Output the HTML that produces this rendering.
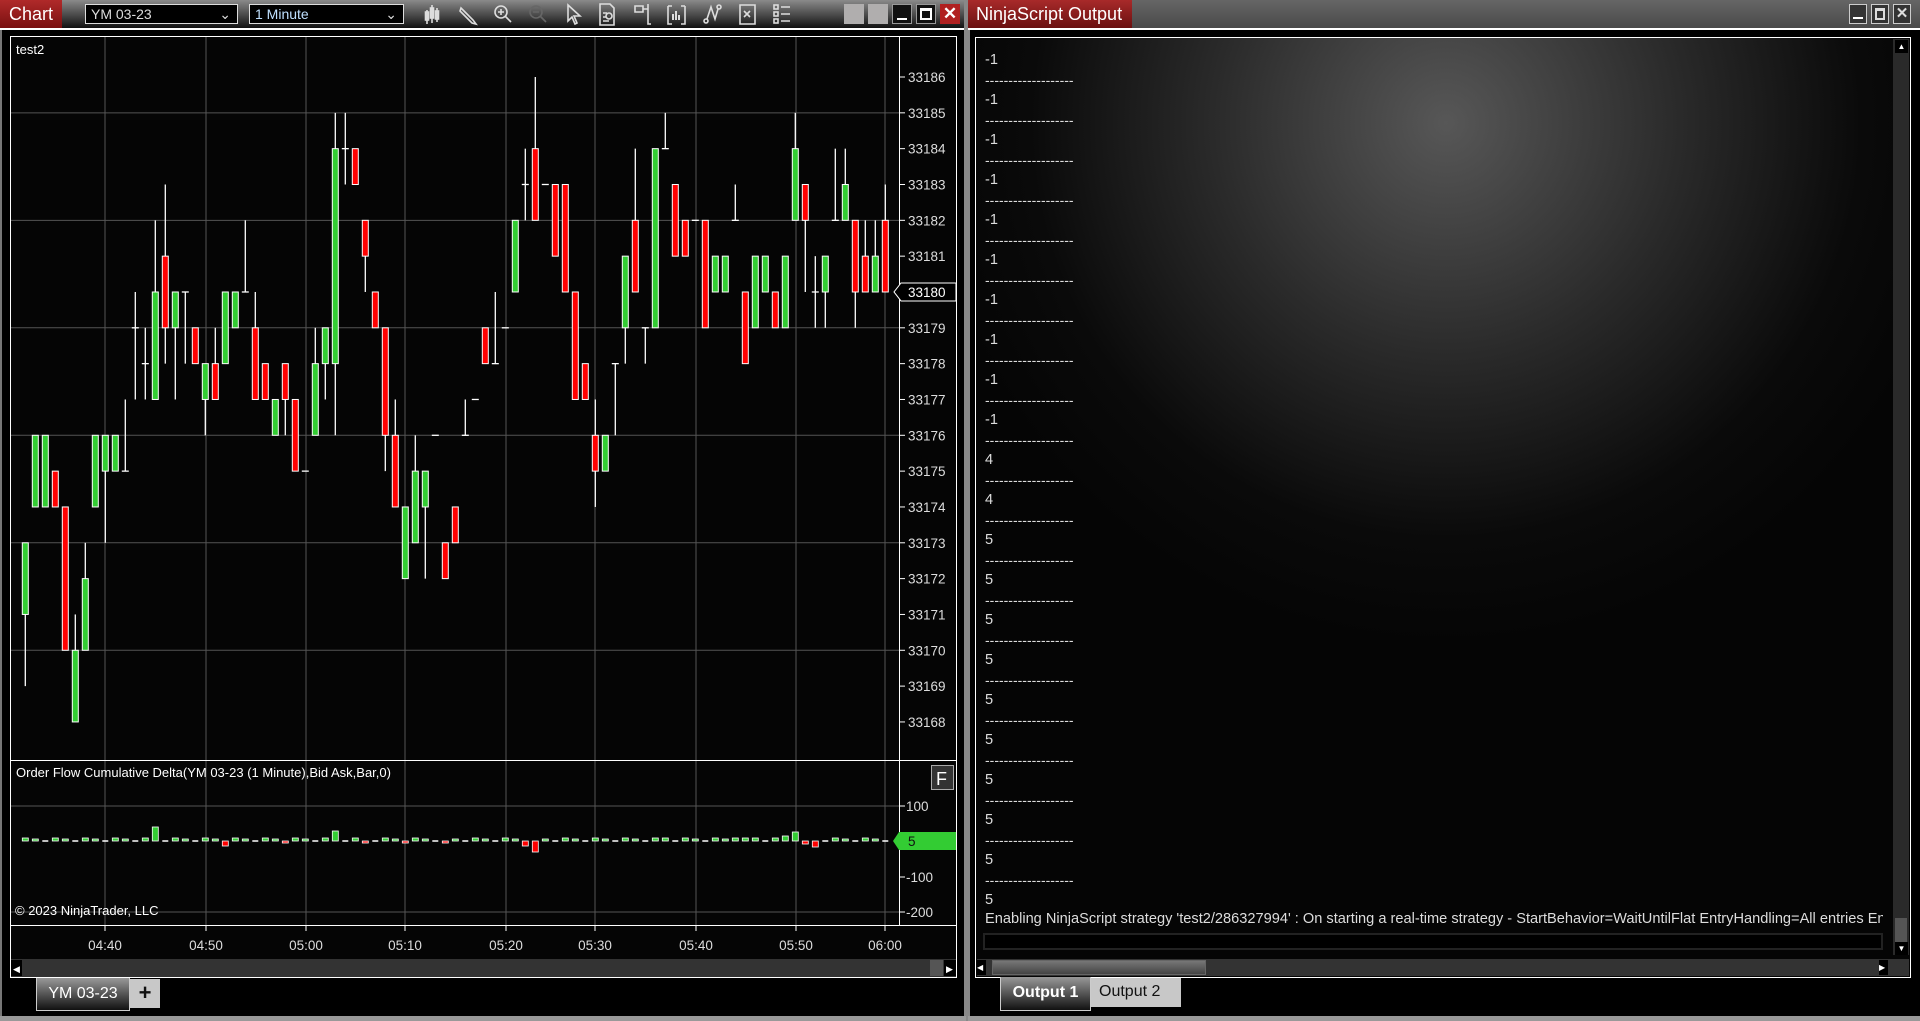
<!DOCTYPE html>
<html><head><meta charset="utf-8"><style>
*{margin:0;padding:0;box-sizing:border-box}
body{width:1920px;height:1021px;background:#000;overflow:hidden;position:relative;font-family:"Liberation Sans",sans-serif;color:#ddd}
.abs{position:absolute}
.tb{background:linear-gradient(#8a8a8a,#2a2a2a 80%,#111)}
.btn{position:absolute;top:4px;width:20px;height:20px}
.dd{position:absolute;top:4px;height:20px;border:1px solid #ddd;background:#000;color:#ddd;font-size:14px;line-height:18px;padding-left:5px}
.dd span{position:absolute;right:6px;top:0}
.out{position:absolute;left:985px;font-size:14.6px;color:#ddd;white-space:nowrap}
</style></head><body>
<div class="abs tb" style="left:0;top:0;width:966px;height:28px"></div>
<div class="abs" style="left:0;top:0;width:62px;height:28px;background:linear-gradient(#b02a2a,#7a1010);color:#fff;font-size:18px;line-height:28px;padding-left:9px">Chart</div>
<div class="dd" style="left:85px;width:153px">YM 03-23<span>&#8964;</span></div>
<div class="dd" style="left:249px;width:155px;color:#bfe0ff">1 Minute<span style="color:#ddd">&#8964;</span></div>
<svg class="abs" style="left:420px;top:2px" width="380" height="26" stroke="#ddd" fill="none" stroke-width="1.6">
 <g transform="translate(4,0)"><path d="M3 8v14M8 3v18M13 6v14"/><rect x="1.5" y="10" width="3" height="8" fill="#ddd"/><rect x="6.5" y="6" width="3" height="10" fill="#ddd"/><rect x="11.5" y="9" width="3" height="8" fill="#ddd"/></g>
 <g transform="translate(38,0)"><path d="M3 6l12 12l3 4l-4-1l-12-12z"/></g>
 <g transform="translate(72,0)"><circle cx="9" cy="10" r="6"/><path d="M13 14l6 6M6 10h6M9 7v6"/></g>
 <g transform="translate(107,0)" stroke="#666"><circle cx="9" cy="10" r="6"/><path d="M13 14l6 6M6 10h6"/></g>
 <g transform="translate(144,0)"><path d="M4 3v16l4-4l3 7l2-1l-3-7h6z"/></g>
 <g transform="translate(177,0)"><path d="M3 2h10l4 4v17h-14z"/><circle cx="12" cy="14" r="3"/><path d="M6 11h4M6 15h3M6 19h6"/></g>
 <g transform="translate(212,0)"><path d="M3 4h8v6h-8zM11 7h5M16 2v20h3"/></g>
 <g transform="translate(246,0)"><path d="M2 4v18h4M19 4v18h-4M6 4h-4M15 4h4"/><path d="M7 18v-6M10 18v-9M13 18v-5" stroke-width="2"/></g>
 <g transform="translate(282,0)"><circle cx="4" cy="19" r="2"/><circle cx="17" cy="5" r="2"/><path d="M5 17l4-12l4 12l3-10"/></g>
 <g transform="translate(317,0)"><path d="M3 3h15v19h-15z"/><path d="M7 9l6 6M7 15l6-6"/></g>
 <g transform="translate(352,0)"><rect x="2" y="3" width="4" height="4"/><rect x="2" y="10" width="4" height="4"/><rect x="2" y="17" width="4" height="4"/><path d="M9 5h9M9 12h9M9 19h9"/></g>
</svg>
<div class="btn" style="left:844px;background:#b0aeae"></div>
<div class="btn" style="left:868px;background:#b0aeae"></div>
<div class="btn" style="left:892px;background:#111;border:1px solid #999"><div class="abs" style="left:4px;top:13px;width:10px;height:2px;background:#fff"></div></div>
<div class="btn" style="left:916px;background:#111;border:1px solid #999"><div class="abs" style="left:3px;top:3px;width:12px;height:12px;border:2px solid #fff;border-top-width:3px"></div></div>
<div class="btn" style="left:940px;background:#b02020;color:#fff;font-size:17px;font-weight:bold;text-align:center;line-height:20px">✕</div>
<div class="abs" style="left:0;top:28px;width:966px;height:2px;background:#fff"></div>
<div class="abs" style="left:0;top:30px;width:966px;height:988px;background:#000;border-left:2px solid #777"></div>
<div class="abs" style="left:964px;top:0;width:4px;height:1021px;background:#888"></div>
<div class="abs" style="left:0;top:1016px;width:966px;height:5px;background:#999"></div>

<svg class="abs" id="ch" style="left:0;top:0" width="966" height="1021" font-family="Liberation Sans, sans-serif"></svg>

<div class="abs" style="left:36px;top:978px;width:94px;height:33px;background:linear-gradient(#999,#111);border:1px solid #ccc;border-top:none;color:#fff;font-size:16px;line-height:32px;text-align:center">YM 03-23</div>
<div class="abs" style="left:130px;top:979px;width:30px;height:29px;background:#c8c8c8;color:#111;font-size:22px;font-weight:bold;line-height:28px;text-align:center">+</div>

<div class="abs" style="left:968px;top:0;width:952px;height:28px;background:linear-gradient(#666,#4a4a4a)"></div>
<div class="abs" style="left:968px;top:0;width:164px;height:28px;background:linear-gradient(#a82a2a,#6a1010);color:#fff;font-size:18px;line-height:28px;padding-left:8px">NinjaScript Output</div>
<div class="btn" style="left:1849px;width:18px;border:1px solid #ccc;background:#333"><div class="abs" style="left:3px;top:12px;width:10px;height:2px;background:#fff"></div></div>
<div class="btn" style="left:1871px;width:18px;border:1px solid #ccc;background:#333"><div class="abs" style="left:3px;top:3px;width:10px;height:12px;border:2px solid #ddd;border-top-width:3px"></div></div>
<div class="btn" style="left:1893px;width:18px;border:1px solid #ccc;background:#333;color:#ddd;font-size:15px;font-weight:bold;text-align:center;line-height:18px">✕</div>
<div class="abs" style="left:968px;top:28px;width:952px;height:2px;background:#fff"></div>
<div class="abs" style="left:970px;top:30px;width:950px;height:986px;background:#000"></div>
<div class="abs" style="left:975px;top:37px;width:936px;height:941px;border:1px solid #fff;background:radial-gradient(circle 520px at 470px 85px,#575757,#2a2a2a 45%,#0a0a0a 80%,#050505)"></div>
<div class="abs" style="left:1893px;top:39px;width:16px;height:916px;background:#2a2a2a"></div>
<div class="abs" style="left:1895px;top:40px;width:13px;height:13px;background:#000;color:#fff;font-size:8px;text-align:center;line-height:13px">▲</div>
<div class="abs" style="left:1895px;top:918px;width:12px;height:25px;background:#555"></div>
<div class="abs" style="left:1895px;top:942px;width:13px;height:13px;background:#000;color:#fff;font-size:8px;text-align:center;line-height:13px">▼</div>
<div id="outtxt"></div>
<div class="out" style="top:911px;width:898px;overflow:hidden">Enabling NinjaScript strategy 'test2/286327994' : On starting a real-time strategy - StartBehavior=WaitUntilFlat EntryHandling=All entries EntriesPerDirection=1</div>
<div class="abs" style="left:983px;top:933px;width:900px;height:17px;border:2px solid #222;background:#000"></div>
<div class="abs" style="left:977px;top:959px;width:932px;height:17px;background:#333"></div>
<div class="abs" style="left:992px;top:960px;width:214px;height:15px;background:linear-gradient(#777,#444);border:1px solid #666"></div>
<div class="abs" style="left:977px;top:960px;width:9px;height:15px;background:#000;color:#fff;font-size:8px;line-height:15px">◀</div>
<div class="abs" style="left:1879px;top:960px;width:9px;height:15px;background:#000;color:#fff;font-size:8px;line-height:15px">▶</div>
<div class="abs" style="left:1000px;top:977px;width:91px;height:34px;background:linear-gradient(#999,#111);border:1px solid #ccc;border-top:none;color:#fff;font-size:16px;font-weight:bold;line-height:32px;text-align:center">Output 1</div>
<div class="abs" style="left:1091px;top:978px;width:90px;height:29px;background:#c8c8c8;color:#111;font-size:16px;line-height:28px;padding-left:8px">Output 2</div>
<div class="abs" style="left:968px;top:1016px;width:952px;height:5px;background:#999"></div>
<div class="abs" style="left:968px;top:30px;width:2px;height:986px;background:#888"></div>

<script>
(function(){
var o='',vals=[];
for(var i=0;i<10;i++)vals.push('-1');vals.push('4','4');for(i=0;i<10;i++)vals.push('5');
for(i=0;i<vals.length;i++){var y=52+i*40;o+='<div class="out" style="top:'+y+'px">'+vals[i]+'</div>';
if(i<vals.length-1)o+='<div class="out" style="top:'+(y+20)+'px;font-size:14px">-------------------</div>';}
document.getElementById('outtxt').innerHTML=o;
var C=[[71,73,73,69],[74,76,76,74],[74,76,76,74],[75,74,75,74],[74,70,74,70],[68,70,71,68],[70,72,73,70],[74,76,76,74],[75,76,76,73],[75,76,76,75],
[75,75,77,75],[79,79,80,77],[78,78,79,77],[77,80,82,77],[81,79,83,78],[79,80,80,77],[80,80,80,78],[79,78,79,78],[77,78,78,76],[78,77,79,77],
[78,80,80,78],[79,80,80,79],[80,80,82,80],[79,77,80,77],[78,77,78,77],[76,77,77,76],[78,77,78,76],[77,75,77,75],[75,75,75,75],[76,78,79,76],
[78,79,79,77],[78,84,85,76],[84,84,85,83],[84,83,84,83],[82,81,82,80],[80,79,80,79],[79,76,79,75],[76,74,77,74],[72,74,74,72],[73,75,76,73],
[74,75,75,72],[76,76,76,76],[73,72,73,72],[74,73,74,73],[76,76,77,76],[77,77,77,77],[79,78,79,78],[78,78,80,78],[79,79,79,79],[80,82,82,80],
[83,83,84,82],[84,82,86,82],[83,83,83,83],[83,81,83,81],[83,80,83,80],[80,77,80,77],[78,77,78,77],[76,75,77,74],[75,76,76,75],[78,78,78,76],
[79,81,81,78],[82,80,84,80],[79,79,79,78],[79,84,84,79],[84,84,85,84],[83,81,83,81],[82,81,82,81],[82,82,82,82],[82,79,82,79],[80,81,81,80],
[80,81,81,80],[82,82,83,82],[80,78,80,78],[79,81,81,79],[80,81,81,80],[80,79,80,79],[79,81,81,79],[82,84,85,82],[83,82,83,80],[80,80,81,79],
[80,81,81,79],[82,82,84,82],[82,83,84,82],[82,80,82,79],[81,80,82,80],[80,81,82,80],[82,80,83,80]];
function Y(p){return 77+(33186-p)*35.83;}
function X(i){return 25.3+10*i;}
var s='';
s+='<rect x="10.5" y="36.5" width="946" height="941" fill="#050505" stroke="#fff"/>';
var gx=[105,206,306,405,506,595,696,796,885];
gx.forEach(function(x){s+='<line x1="'+x+'" y1="37" x2="'+x+'" y2="925" stroke="#555"/>';});
[85,82,79,76,73,70].forEach(function(p){s+='<line x1="11" y1="'+Y(33100+p)+'" x2="900" y2="'+Y(33100+p)+'" stroke="#555"/>';});
[806,912].forEach(function(y){s+='<line x1="11" y1="'+y+'" x2="900" y2="'+y+'" stroke="#555"/>';});
s+='<line x1="10" y1="760.5" x2="957" y2="760.5" stroke="#fff"/>';
s+='<line x1="10" y1="925.5" x2="957" y2="925.5" stroke="#fff"/>';
s+='<line x1="899.5" y1="37" x2="899.5" y2="925" stroke="#fff"/>';
for(var p=68;p<=86;p++){var y=Y(33100+p);s+='<line x1="900" y1="'+y+'" x2="905" y2="'+y+'" stroke="#fff"/>';
 if(p!=80)s+='<text x="908" y="'+(y+5)+'" fill="#ddd" font-size="13.5">331'+p+'</text>';}
var y80=Y(33180);
s+='<path d="M894 '+y80+' l7 -9 h55 v18 h-55 z" fill="#000" stroke="#fff"/><text x="908" y="'+(y80+5)+'" fill="#fff" font-size="13.5">33180</text>';
C.forEach(function(c,i){var x=X(i);var o=33100+c[0],cl=33100+c[1],h=33100+c[2],l=33100+c[3];
 s+='<line x1="'+x+'" y1="'+Y(h)+'" x2="'+x+'" y2="'+Y(l)+'" stroke="#fff" stroke-width="1.3"/>';
 if(o==cl){s+='<line x1="'+(x-3.5)+'" y1="'+Y(o)+'" x2="'+(x+3.5)+'" y2="'+Y(o)+'" stroke="#fff" stroke-width="1.3"/>';}
 else{var t=Y(Math.max(o,cl)),b=Y(Math.min(o,cl));s+='<rect x="'+(x-3)+'" y="'+t+'" width="6" height="'+(b-t)+'" fill="'+(cl>o?'#3c3':'#f00')+'" stroke="#fff"/>';}
});
var big={13:13,31:9,77:8,76:4,20:-5,51:-11,50:-5,79:-6,78:-3,15:2,26:-2,34:-2,42:-2,71:2,73:2,38:-2,64:2,30:2};
for(var i=0;i<87;i++){var x=X(i),v=big[i];
 if(v===undefined){v=(i%3==0)?2:(i%3==1?1:0);}
 if(v>0){s+='<rect x="'+(x-3)+'" y="'+(841-v-1)+'" width="6" height="'+(v+1)+'" fill="#3c3" stroke="#fff" stroke-width="0.8"/>';}
 else if(v<0){s+='<rect x="'+(x-3)+'" y="841" width="6" height="'+(-v)+'" fill="#f00" stroke="#fff" stroke-width="0.8"/>';}
 else s+='<line x1="'+(x-3)+'" y1="841" x2="'+(x+3)+'" y2="841" stroke="#fff" stroke-width="1.5"/>';}
[[806,'100'],[877,'-100'],[912,'-200']].forEach(function(a){s+='<line x1="900" y1="'+a[0]+'" x2="905" y2="'+a[0]+'" stroke="#fff"/><text x="906" y="'+(a[0]+5)+'" fill="#ddd" font-size="13.5">'+a[1]+'</text>';});
s+='<path d="M893 841 l6 -9 h57 v18 h-57 z" fill="#3c3"/><text x="908" y="846" fill="#111" font-size="13.5">5</text>';
s+='<rect x="931.5" y="765.5" width="22" height="24" fill="#333" stroke="#aaa"/><text x="936" y="785" fill="#fff" font-size="18">F</text>';
var tl=['04:40','04:50','05:00','05:10','05:20','05:30','05:40','05:50','06:00'];
gx.forEach(function(x,k){s+='<line x1="'+x+'" y1="926" x2="'+x+'" y2="931" stroke="#fff"/><text x="'+x+'" y="950" fill="#ddd" font-size="13.5" text-anchor="middle">'+tl[k]+'</text>';});
s+='<rect x="11" y="959" width="945" height="18" fill="#333"/><rect x="11" y="960" width="11" height="16" fill="#000"/><text x="13" y="972" fill="#fff" font-size="9">◀</text><rect x="944" y="960" width="12" height="16" fill="#000"/><text x="946" y="972" fill="#fff" font-size="9">▶</text><rect x="930" y="960" width="13" height="16" fill="#555"/>';
s+='<text x="16" y="54" fill="#fff" font-size="13">test2</text>';
s+='<text x="16" y="777" fill="#fff" font-size="13">Order Flow Cumulative Delta(YM 03-23 (1 Minute),Bid Ask,Bar,0)</text>';
s+='<text x="15" y="915" fill="#fff" font-size="13">© 2023 NinjaTrader, LLC</text>';
document.getElementById('ch').innerHTML=s;
})();
</script>
</body></html>
